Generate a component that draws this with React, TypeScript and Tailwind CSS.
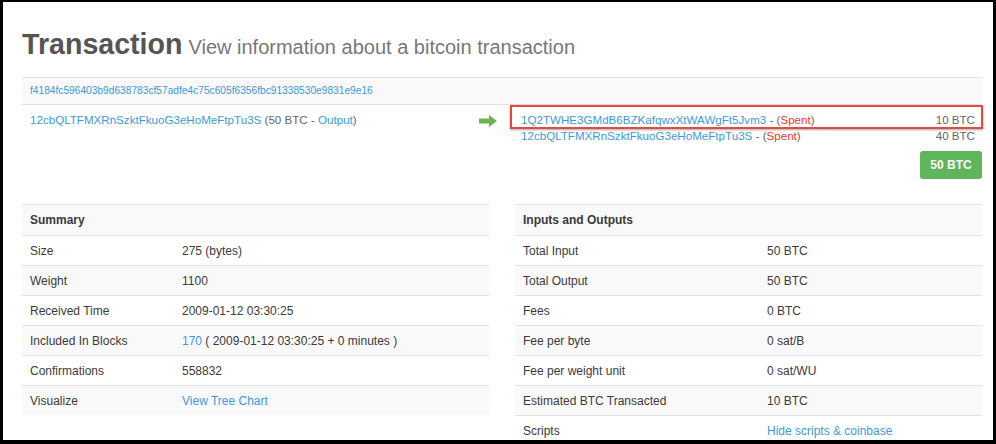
import React from 'react';

const font = { fontFamily: '"Liberation Sans", Arial, sans-serif' };

type Row = { label: string; value: React.ReactNode };

const summaryRows: Row[] = [
  { label: 'Size', value: '275 (bytes)' },
  { label: 'Weight', value: '1100' },
  { label: 'Received Time', value: '2009-01-12 03:30:25' },
  {
    label: 'Included In Blocks',
    value: (
      <>
        <span className="text-[#3d9ad8]">170</span> ( 2009-01-12 03:30:25 + 0 minutes )
      </>
    ),
  },
  { label: 'Confirmations', value: '558832' },
  { label: 'Visualize', value: <span className="text-[#3d9ad8]">View Tree Chart</span> },
];

const ioRows: Row[] = [
  { label: 'Total Input', value: '50 BTC' },
  { label: 'Total Output', value: '50 BTC' },
  { label: 'Fees', value: '0 BTC' },
  { label: 'Fee per byte', value: '0 sat/B' },
  { label: 'Fee per weight unit', value: '0 sat/WU' },
  { label: 'Estimated BTC Transacted', value: '10 BTC' },
  { label: 'Scripts', value: <span className="text-[#3d9ad8]">Hide scripts &amp; coinbase</span> },
];

const InfoTable: React.FC<{ title: string; rows: Row[]; labelWidth: string }> = ({ title, rows, labelWidth }) => (
  <div className="flex-1 text-[12px] text-[#3a3a3a]">
    <div className="h-[31px] border-t border-[#e2e2e2] bg-[#f9f9f9] px-2 flex items-center font-bold">{title}</div>
    {rows.map((row, i) => (
      <div
        key={row.label}
        className={`h-[30px] border-t border-[#e2e2e2] flex items-center ${i % 2 === 1 ? 'bg-[#f9f9f9]' : 'bg-white'}`}
      >
        <div className={`${labelWidth} px-2 shrink-0`}>{row.label}</div>
        <div>{row.value}</div>
      </div>
    ))}
  </div>
);

const Arrow = () => (
  <svg width="18" height="12" viewBox="0 0 18 12">
    <path d="M0 3.5h10V0l8 6-8 6V8.5H0z" fill="#6cb44f" />
  </svg>
);

export default function App() {
  return (
    <div className="bg-black w-[996px] h-[444px] pt-[2px] pl-[3px] pr-[3px] pb-[4px]" style={font}>
      <div className="bg-white w-[990px] h-[438px] overflow-hidden pl-[19px] pr-[11px] pt-[24px]">
        <div className="flex items-baseline gap-[6px] h-[36px] mb-[15px]">
          <h1 className="text-[28.6px] leading-[36px] font-bold text-[#555]">Transaction</h1>
          <span className="text-[20px] text-[#777]">View information about a bitcoin transaction</span>
        </div>

        <div className="h-[28px] border-y border-[#e2e2e2] bg-[#f9f9f9] px-2 flex items-center text-[10.2px] text-[#3d9ad8]">
          f4184fc596403b9d638783cf57adfe4c75c605f6356fbc91338530e9831e9e16
        </div>

        <div className="flex text-[11.6px] text-[#666] pt-[7px]">
          <div className="w-[448px] px-2 leading-[16px]">
            <span className="text-[#3d9ad8]">12cbQLTFMXRnSzktFkuoG3eHoMeFtpTu3S</span> (50 BTC -{' '}
            <span className="text-[#3d9ad8]">Output</span>)
          </div>
          <div className="w-[43px] pl-[9px] pt-[3px]">
            <Arrow />
          </div>
          <div className="flex-1 pl-2 pr-[7px]">
            <div className="relative flex justify-between leading-[16px]">
              <span>
                <span className="text-[#3d9ad8]">1Q2TWHE3GMdB6BZKafqwxXtWAWgFt5Jvm3</span> - (
                <span className="text-[#e8382c]">Spent</span>)
              </span>
              <span>10 BTC</span>
              <div className="absolute -top-[7px] -bottom-[1px] -left-[11px] -right-[8px] border-2 border-[#e5493d] shadow-[0_1px_2px_rgba(0,0,0,0.35)]" />
            </div>
            <div className="flex justify-between leading-[16px]">
              <span>
                <span className="text-[#3d9ad8]">12cbQLTFMXRnSzktFkuoG3eHoMeFtpTu3S</span> - (
                <span className="text-[#e8382c]">Spent</span>)
              </span>
              <span>40 BTC</span>
            </div>
            <div className="flex justify-end mt-[7px] -mr-[7px]">
              <button className="w-[62px] h-[28px] rounded-[3px] bg-[#5eb55c] text-white text-[12px] font-bold">
                50 BTC
              </button>
            </div>
          </div>
        </div>

        <div className="flex gap-[26px] mt-[25px]">
          <InfoTable title="Summary" rows={summaryRows} labelWidth="w-[160px]" />
          <InfoTable title="Inputs and Outputs" rows={ioRows} labelWidth="w-[252px]" />
        </div>
      </div>
    </div>
  );
}
